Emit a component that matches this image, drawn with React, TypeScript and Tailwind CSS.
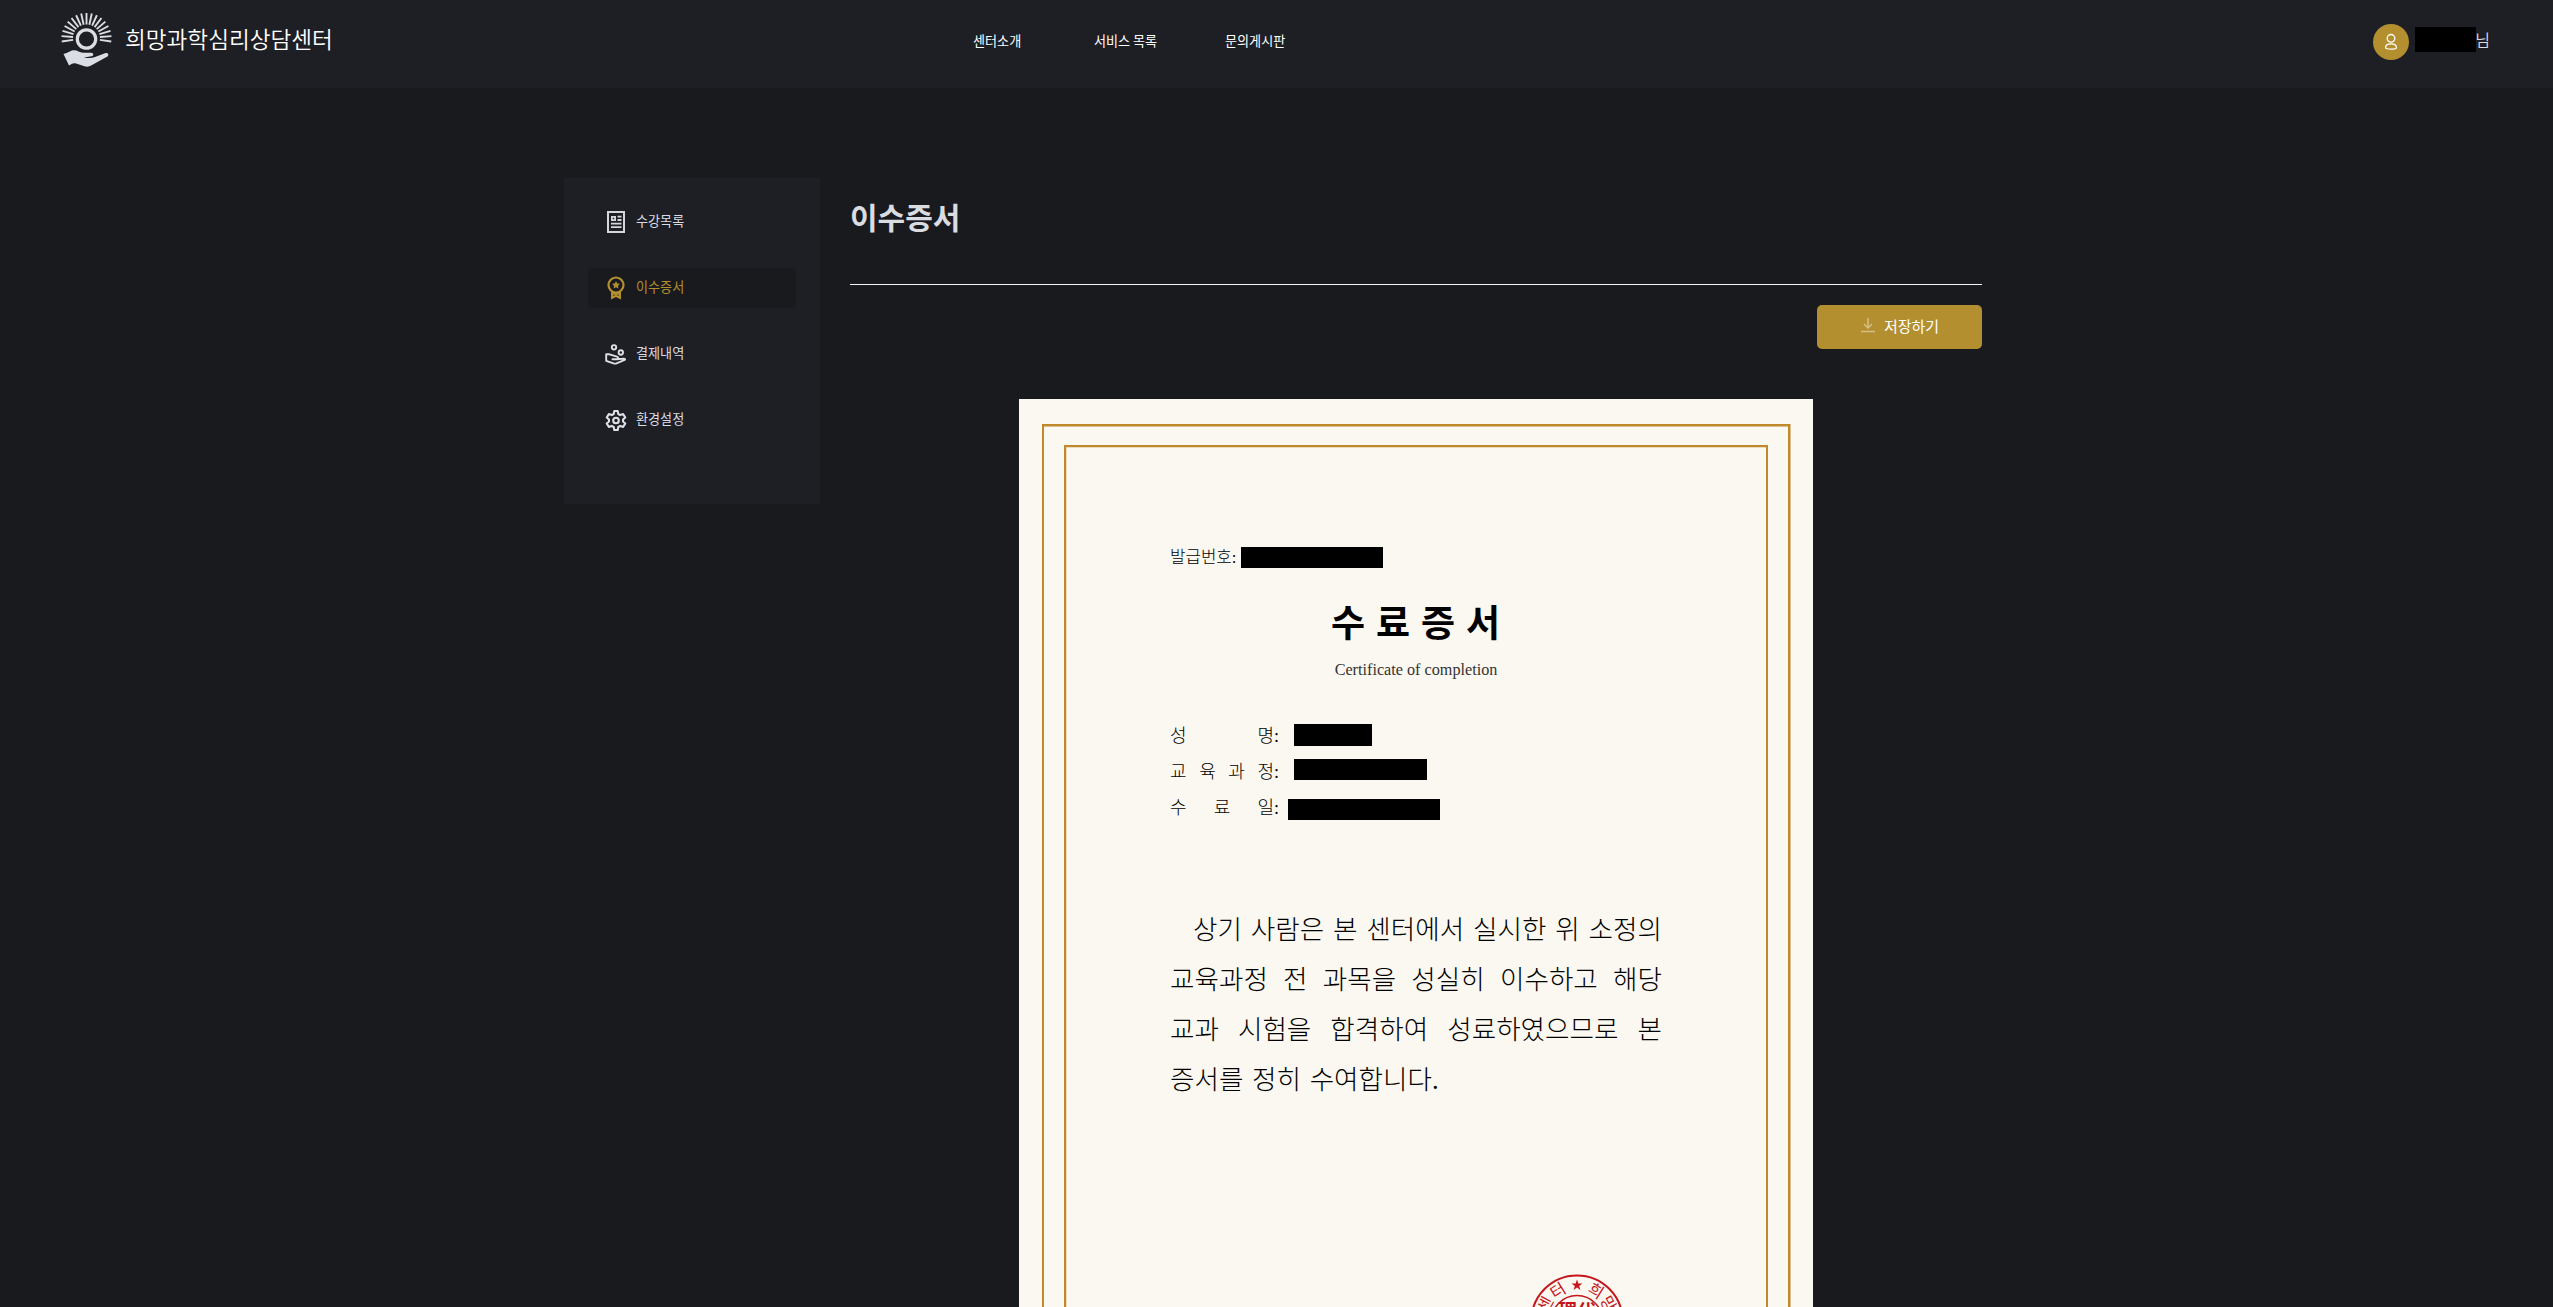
import React from "react";

const sans = "font-['Noto_Sans_CJK_KR',sans-serif]";
const serif = "font-['Liberation_Serif','Noto_Sans_CJK_KR',serif]";

function Logo() {
  const rays = Array.from({ length: 17 }, (_, i) => -98 + i * 12.25);
  return (
    <svg width="52" height="56" viewBox="0 0 52 56" className="shrink-0">
      <g stroke="#dadde3" strokeWidth="1.9">
        {rays.map((a) => (
          <line key={a} x1="25.5" y1="2" x2="25.5" y2="13.500" transform={`rotate(${a} 25.5 27)`} />
        ))}
      </g>
      <circle cx="25.5" cy="28" r="9.2" fill="none" stroke="#dadde3" strokeWidth="3.2" />
      <path
        fill="#dadde3"
        d="M2.500 43 L5.500 42 L11 39.500 C16 38.500 18 41.500 22 41.800 L30 41.800 C33 42 33 44.800 30.500 45.200 L23 46.500 C27 47.500 31 47 34 46 L44 42.200 C47 41.500 48.500 44 46.500 45.500 L31 54 C28 55.800 26 56 23.500 55.200 L15 52.500 C13.500 52 12.500 52 11 52.800 L8 54.500 Z"
      />
    </svg>
  );
}

function ListIcon() {
  return (
    <svg width="24" height="24" viewBox="0 0 24 24" fill="none" stroke="#d3d6dc" strokeWidth="1.800">
      <rect x="4" y="2" width="16" height="20" strokeWidth="2" />
      <rect x="7.900" y="6.900" width="3.200" height="3.200" />
      <path d="M13.500 6.700h4M13.500 10h4M7 13.600h10.500M7 17.200h10.500" />
    </svg>
  );
}

function AwardIcon() {
  return (
    <svg width="24" height="24" viewBox="0 0 24 24" fill="none" stroke="#b38f30" strokeWidth="2.200">
      <circle cx="12" cy="9" r="7.500" />
      <path fill="#b38f30" stroke="none" d="M12 5l1.200 2.500 2.800.3-2 2 .5 2.800-2.500-1.300-2.500 1.300.5-2.800-2-2 2.800-.3z" />
      <path d="M8.100 15.500v6.300l3.900-2 3.900 2v-6.300M9 17.600h6" />
    </svg>
  );
}

function PayIcon() {
  return (
    <svg width="24" height="24" viewBox="0 0 24 24" fill="none" stroke="#dde0e6" strokeWidth="1.900" strokeLinejoin="round" strokeLinecap="round">
      <circle cx="10" cy="5.300" r="2.200" />
      <circle cx="16.800" cy="10.500" r="2.200" />
      <path d="M8.500 17.200h4.200c1.800 0 2-1.900.3-2.500L5.500 12.300H2.200v6.500l7.300 2.600c1 .3 2 .3 3-.1l8.200-3.400c.8-.4.300-1.300-.7-1.300l-7 .6" />
    </svg>
  );
}

function GearIcon() {
  return (
    <svg width="24" height="24" viewBox="0 0 24 24" fill="none" stroke="#dde0e6" strokeWidth="2.100" strokeLinejoin="round">
      <circle cx="12" cy="12.500" r="2.800" />
      <path d="M10.300 3h3.400l.6 3 1.900 1.100 2.900-1 2.200 3.400-2.300 2v2l2.300 2-2.200 3.400-2.900-1-1.900 1.100-.6 3h-3.400l-.6-3-1.900-1.100-2.900 1-2.200-3.400 2.300-2v-2l-2.300-2 2.200-3.400 2.900 1 1.900-1.100z" />
    </svg>
  );
}

const menu = [
  { label: "수강목록", icon: <ListIcon />, active: false },
  { label: "이수증서", icon: <AwardIcon />, active: true },
  { label: "결제내역", icon: <PayIcon />, active: false },
  { label: "환경설정", icon: <GearIcon />, active: false },
];

const fields = [
  { chars: ["성", "명"], bar: "ml-[9px] w-[78px] h-[22px] -mt-[2px]" },
  { chars: ["교", "육", "과", "정"], bar: "ml-[9px] w-[133px] h-[21px] -mt-[5px]" },
  { chars: ["수", "료", "일"], bar: "ml-[3px] w-[152px] h-[21px] mt-[2px]" },
];

const lines = [
  ["상기", "사람은", "본", "센터에서", "실시한", "위", "소정의"],
  ["교육과정", "전", "과목을", "성실히", "이수하고", "해당"],
  ["교과", "시험을", "합격하여", "성료하였으므로", "본"],
];

const sealRing = [
  { char: "센", angle: -62 },
  { char: "터", angle: -32 },
  { char: "희", angle: 32 },
  { char: "망", angle: 61 },
];

function Seal() {
  return (
    <svg width="94" height="94" viewBox="-47 -47 94 94" fill="#c4161c">
      <g fill="none" stroke="#c4161c">
        <circle r="45.600" strokeWidth="2" />
        <circle r="25.500" strokeWidth="1.500" />
      </g>
      <path d="M0-41.500l1.400 4h4.100l-3.300 2.500 1.200 4L0-33.400l-3.400 2.400 1.200-4-3.300-2.500h4.100z" />
      {sealRing.map((s) => (
        <text
          key={s.char}
          y="-30"
          fontSize="16"
          textAnchor="middle"
          className={sans}
          transform={`rotate(${s.angle})`}
        >
          {s.char}
        </text>
      ))}
      <text y="-3.500" fontSize="19" fontWeight="700" textAnchor="middle" className={sans}>
        理代
      </text>
    </svg>
  );
}

export default function App() {
  return (
    <div className={`h-[1307px] overflow-hidden bg-[#191a1e] text-[#d9dce1] ${sans}`}>
      <header className="flex h-[88px] justify-between bg-[#1e1f25]">
        <div className="flex w-[973px] pl-[61px] pt-[11px]">
          <Logo />
          <div className="ml-[12px] mt-[12px] text-[22.600px] font-[350] leading-[32px] text-white">희망과학심리상담센터</div>
        </div>
        <nav className="flex flex-1 pt-[31px] text-[13.100px] leading-[20px] text-white">
          <span className="w-[121px]">센터소개</span>
          <span className="w-[131px]">서비스 목록</span>
          <span>문의게시판</span>
        </nav>
        <div className="flex pr-[63px] pt-[24px]">
          <div className="flex size-[36px] items-center justify-center rounded-full bg-[#b38f30]">
            <svg width="16" height="18" viewBox="0 0 16 18" fill="none" stroke="#fff" strokeWidth="1.300">
              <circle cx="8" cy="5.300" r="3.800" />
              <path d="M8 10.800c3.300 0 5.400 1.500 5.400 3.600 0 1.200-2.400 1.800-5.400 1.800s-5.400-.6-5.400-1.800c0-2.100 2.100-3.600 5.400-3.600z" />
            </svg>
          </div>
          <div className="ml-[6px] mt-[3px] h-[25px] w-[61px] bg-black" />
          <span className="-ml-px mt-[3px] text-[16px] font-[350] leading-[24px]">님</span>
        </div>
      </header>

      <div className="ml-[564px] mt-[90px] flex items-start">
        <aside className="flex h-[326px] w-[256px] flex-col gap-[26px] bg-[#1e1f25] px-6 pt-6">
          {menu.map((m) => (
            <div
              key={m.label}
              className={
                m.active
                  ? "flex h-10 items-center rounded bg-[#191a1e] pl-4 text-[#b38f30]"
                  : "flex h-10 items-center pl-4"
              }
            >
              {m.icon}
              <span className="-mt-[2px] ml-[8px] text-[13.100px] leading-5">{m.label}</span>
            </div>
          ))}
        </aside>

        <main className="ml-[30px] flex w-[1132px] flex-col">
          <div className="h-[107px] border-b border-[#f4f4f6] pt-[16px] text-[30px] font-bold leading-[44px]">
            이수증서
          </div>
          <button className="mt-[20px] flex h-[44px] w-[165px] items-center justify-center self-end rounded-[5px] bg-[#b38f30] pb-[2px] text-[15px] text-white">
            <svg width="14" height="15" viewBox="0 0 14 15" fill="none" stroke="#d6c085" strokeWidth="1.500" className="mb-[2px] ml-px mr-[9px]">
              <path d="M7 0v10M3 6l4 4 4-4M0 13.500h14" />
            </svg>
            저장하기
          </button>

          <section className={`mt-[50px] h-[1123px] w-[794px] self-center bg-[#fbf8f1] px-[23px] pt-[25px] text-black ${serif}`}>
            <div className="h-[1073px] border-2 border-[#c08a2c] px-[20px] pt-[19px] shadow-[inset_0_1px_0_#dcc091,1px_0_0_#dcc091]">
              <div className="h-[1031px] border-2 border-[#c08a2c] pl-[104px] pr-[104px] shadow-[inset_0_1px_0_#ecdcbf,inset_1px_0_0_#ecdcbf]">
                <div className="mt-[97px] flex h-[25px] text-[16.800px] font-light leading-[25px]">
                  <span className="mt-px">발급번호:</span>
                  <span className="ml-[5px] mt-[3px] h-[21px] w-[142px] bg-black" />
                </div>
                <h1 className="mt-[26px] pl-[10px] text-center text-[37px] font-bold leading-[60px] tracking-[11px]">수료증서</h1>
                <p className="mt-[3px] text-center text-[16.200px] leading-[24px] text-[#333]">Certificate of completion</p>
                <div className="mt-[36px] flex flex-col text-[18px] font-light">
                  {fields.map((f) => (
                    <div key={f.chars.join("")} className="flex h-[36px] items-center leading-[24px]">
                      <span className="flex w-[104px] justify-between">
                        {f.chars.map((c) => (
                          <span key={c}>{c}</span>
                        ))}
                      </span>
                      <span className="w-[11px]">:</span>
                      <span className={`bg-black ${f.bar}`} />
                    </div>
                  ))}
                </div>
                <div className="mt-[79px] text-[26.600px] font-light leading-[50px]">
                  {lines.map((words, i) => (
                    <p key={i} className={i === 0 ? "flex justify-between pl-[23px]" : "flex justify-between"}>
                      {words.map((w) => (
                        <span key={w}>{w}</span>
                      ))}
                    </p>
                  ))}
                  <p className="[word-spacing:2px]">증서를 정히 수여합니다.</p>
                </div>
                <div className="mt-[169px] flex pl-[360px]">
                  <Seal />
                </div>
              </div>
            </div>
          </section>
        </main>
      </div>
    </div>
  );
}
